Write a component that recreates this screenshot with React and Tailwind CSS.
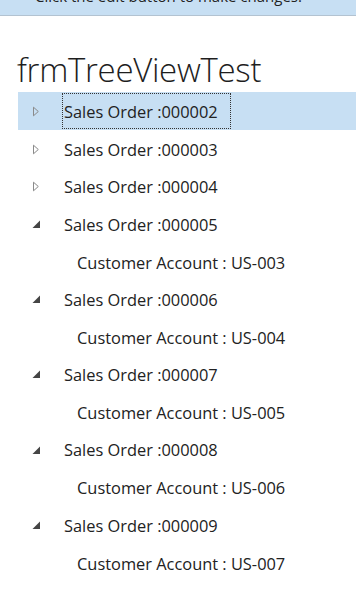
import React from "react";

const rows = [
  { t: "Sales Order :000002", type: "c", sel: true },
  { t: "Sales Order :000003", type: "c" },
  { t: "Sales Order :000004", type: "c" },
  { t: "Sales Order :000005", type: "e" },
  { t: "Customer Account : US-003", type: "child" },
  { t: "Sales Order :000006", type: "e" },
  { t: "Customer Account : US-004", type: "child" },
  { t: "Sales Order :000007", type: "e" },
  { t: "Customer Account : US-005", type: "child" },
  { t: "Sales Order :000008", type: "e" },
  { t: "Customer Account : US-006", type: "child" },
  { t: "Sales Order :000009", type: "e" },
  { t: "Customer Account : US-007", type: "child" },
  { t: "Sales Order :000010", type: "e" },
  { t: "Customer Account : US-008", type: "child" },
];

function Collapsed() {
  return (
    <svg width="8" height="11" viewBox="0 0 8 11" className="block">
      <path d="M1.5 1.2 L6.3 5.5 L1.5 9.8 Z" fill="none" stroke="#8a8a8a" strokeWidth="1" />
    </svg>
  );
}

function Expanded() {
  return (
    <svg width="9" height="9" viewBox="0 0 9 9" className="block">
      <path d="M8 0.5 L8 8 L0.5 8 Z" fill="#454545" />
    </svg>
  );
}

export default function App() {
  return (
    <div className="w-[356px] h-[595px] overflow-hidden bg-white" style={{ fontFamily: "'Open Sans', 'Noto Sans', sans-serif" }}>
      <div className="h-[16px] bg-[#c7dff3] border-b border-[#b3c3d1] overflow-hidden relative">
        <div className="absolute left-[35px] top-[-14px] text-[15px] leading-[20px] text-[#222]">
          Click the edit button to make changes.
        </div>
      </div>
      <div className="pl-[17px] pt-[32px] h-[76px] text-[33px] leading-[44px] font-light text-[#1e1e1e] tracking-[-0.3px] whitespace-nowrap">
        frmTreeViewTest
      </div>
      <div className="ml-[18px]">
        {rows.map((r, i) => (
          <div
            key={i}
            className={`flex items-center h-[37.6px] ${r.sel ? "bg-[#c7dff3]" : ""}`}
          >
            {r.type === "child" ? (
              <div className="pl-[59px] pt-[4px] text-[16.4px] text-[#222] whitespace-nowrap">{r.t}</div>
            ) : (
              <>
                <div className="w-[44px] flex justify-start pl-[14px] pt-[2px]">
                  {r.type === "c" ? <Collapsed /> : <Expanded />}
                </div>
                <div
                  className={`h-[36px] flex items-center pl-[1px] pt-[3px] pr-[12px] text-[16.4px] text-[#222] whitespace-nowrap ${r.sel ? "border border-dotted border-[#333]" : "border border-transparent"}`}
                >
                  {r.t}
                </div>
              </>
            )}
          </div>
        ))}
      </div>
    </div>
  );
}
